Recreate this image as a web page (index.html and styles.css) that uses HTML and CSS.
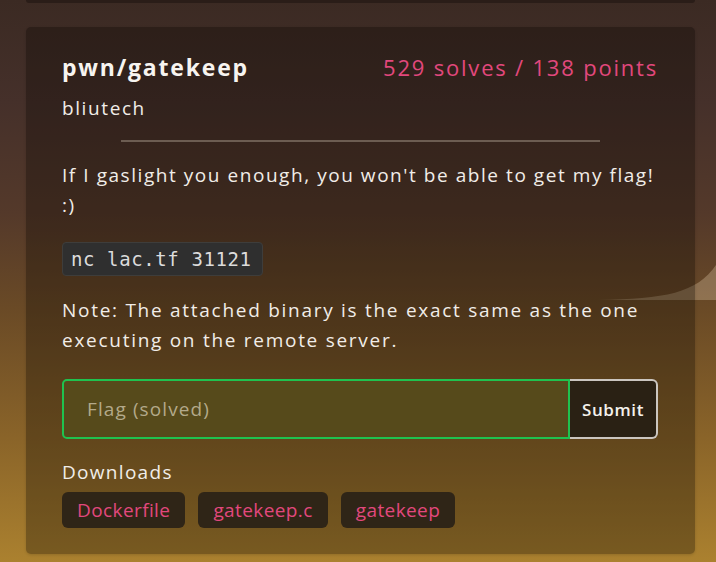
FILE: index.html
```html
<!DOCTYPE html>
<html lang="en">
<head>
<meta charset="utf-8">
<title>pwn/gatekeep</title>
<link rel="stylesheet" href="styles.css">
</head>
<body>
<div class="page">
  <div class="prev"></div>
  <section class="card">
    <div class="head">
      <h2 class="title">pwn/gatekeep</h2>
      <span class="score">529 solves / 138 points</span>
    </div>
    <div class="author">bliutech</div>
    <hr class="rule">
    <p class="text desc">If I gaslight you enough, you won't be able to get my flag! :)</p>
    <div class="code-wrap"><code class="code">nc lac.tf 31121</code></div>
    <p class="text note">Note: The attached binary is the exact same as the one executing on the remote server.</p>
    <form class="flag-form">
      <input class="flag-input" type="text" placeholder="Flag (solved)">
      <button class="submit" type="button">Submit</button>
    </form>
    <h3 class="dl-title">Downloads</h3>
    <div class="downloads">
      <a class="dl">Dockerfile</a>
      <a class="dl">gatekeep.c</a>
      <a class="dl">gatekeep</a>
    </div>
  </section>
</div>
</body>
</html>
```
FILE: styles.css
```css
html, body {
  margin: 0;
  padding: 0;
}
body {
  width: 716px;
  height: 562px;
  overflow: hidden;
  font-family: "Open Sans", "Noto Sans", sans-serif;
  color: #f1ede8;
  background-color: #5a3f25;
  background-image:
    url("data:image/svg+xml;utf8,<svg xmlns='http://www.w3.org/2000/svg' width='716' height='562'><path d='M598 300 C665 299 697 293 716 265 L716 300 Z' fill='rgb(235,212,178)' fill-opacity='0.3'/></svg>"),
    linear-gradient(180deg, #3b2a23 0%, #45302a 18%, #54392a 38%, #6a4a26 55%, #8a6429 78%, #ab812f 100%);
  background-repeat: no-repeat;
}
.page {
  display: flex;
  flex-direction: column;
  gap: 24px;
  padding: 0 21px 0 26px;
}
.prev {
  height: 3px;
  background: #2a1d18;
  border-radius: 0 0 5px 5px;
}
.card {
  background: rgba(8, 4, 0, 0.3);
  border-radius: 5px;
  padding: 24px 37px 26px 36px;
  box-shadow: 0 1px 3px rgba(0, 0, 0, 0.15);
}
.head {
  display: flex;
  justify-content: space-between;
  align-items: baseline;
}
.title {
  margin: 0;
  font-size: 23px;
  font-weight: 700;
  line-height: 32px;
  letter-spacing: 1.8px;
  color: #f7f4f0;
}
.score {
  font-size: 22px;
  line-height: 32px;
  letter-spacing: 1.8px;
  color: #e2487d;
}
.author {
  margin-top: 11px;
  font-size: 19px;
  line-height: 28px;
  letter-spacing: 1.6px;
}
.rule {
  width: 479px;
  height: 2px;
  margin: 18px auto 0;
  border: 0;
  background: #6c5d52;
}
.text {
  margin: 0;
  font-size: 19px;
  line-height: 29.5px;
  letter-spacing: 1.55px;
}
.desc {
  margin-top: 19px;
}
.code-wrap {
  margin-top: 22px;
}
.code {
  display: inline-block;
  height: 32px;
  line-height: 32px;
  padding: 0 10px 0 8px;
  background: #2f2f2f;
  border: 1px solid #3e3d3b;
  border-radius: 4px;
  font-family: "DejaVu Sans Mono", monospace;
  font-size: 19px;
  letter-spacing: 0.6px;
  color: #dcdcdc;
}
.note {
  margin-top: 20px;
  letter-spacing: 1.72px;
}
.flag-form {
  display: flex;
  height: 60px;
  margin: 24px 0 0;
}
.flag-input {
  flex: 1;
  min-width: 0;
  box-sizing: border-box;
  height: 60px;
  margin: 0;
  padding: 0 0 0 23px;
  background: #564a1b;
  border: 2px solid #1fc24f;
  border-radius: 5px 0 0 5px;
  font-family: inherit;
  font-size: 19px;
  letter-spacing: 1.1px;
  color: #f1ede8;
  outline: none;
}
.flag-input::placeholder {
  color: #b3a98a;
}
.submit {
  box-sizing: border-box;
  width: 88px;
  height: 60px;
  margin: 0;
  padding: 0;
  background: #2a2114;
  border: 2px solid #cbc6c0;
  border-left: 0;
  border-radius: 0 6px 6px 0;
  font-family: inherit;
  font-size: 17px;
  font-weight: 600;
  letter-spacing: 0.6px;
  color: #f4f1ec;
}
.dl-title {
  margin: 19px 0 0;
  font-size: 19px;
  font-weight: 400;
  line-height: 28px;
  letter-spacing: 1.3px;
}
.downloads {
  display: flex;
  gap: 13px;
  margin-top: 6px;
}
.dl {
  display: flex;
  align-items: center;
  height: 36px;
  padding: 0 15px;
  background: #2f2517;
  border-radius: 6px;
  font-size: 19px;
  letter-spacing: 0.4px;
  color: #e2487d;
}
```
